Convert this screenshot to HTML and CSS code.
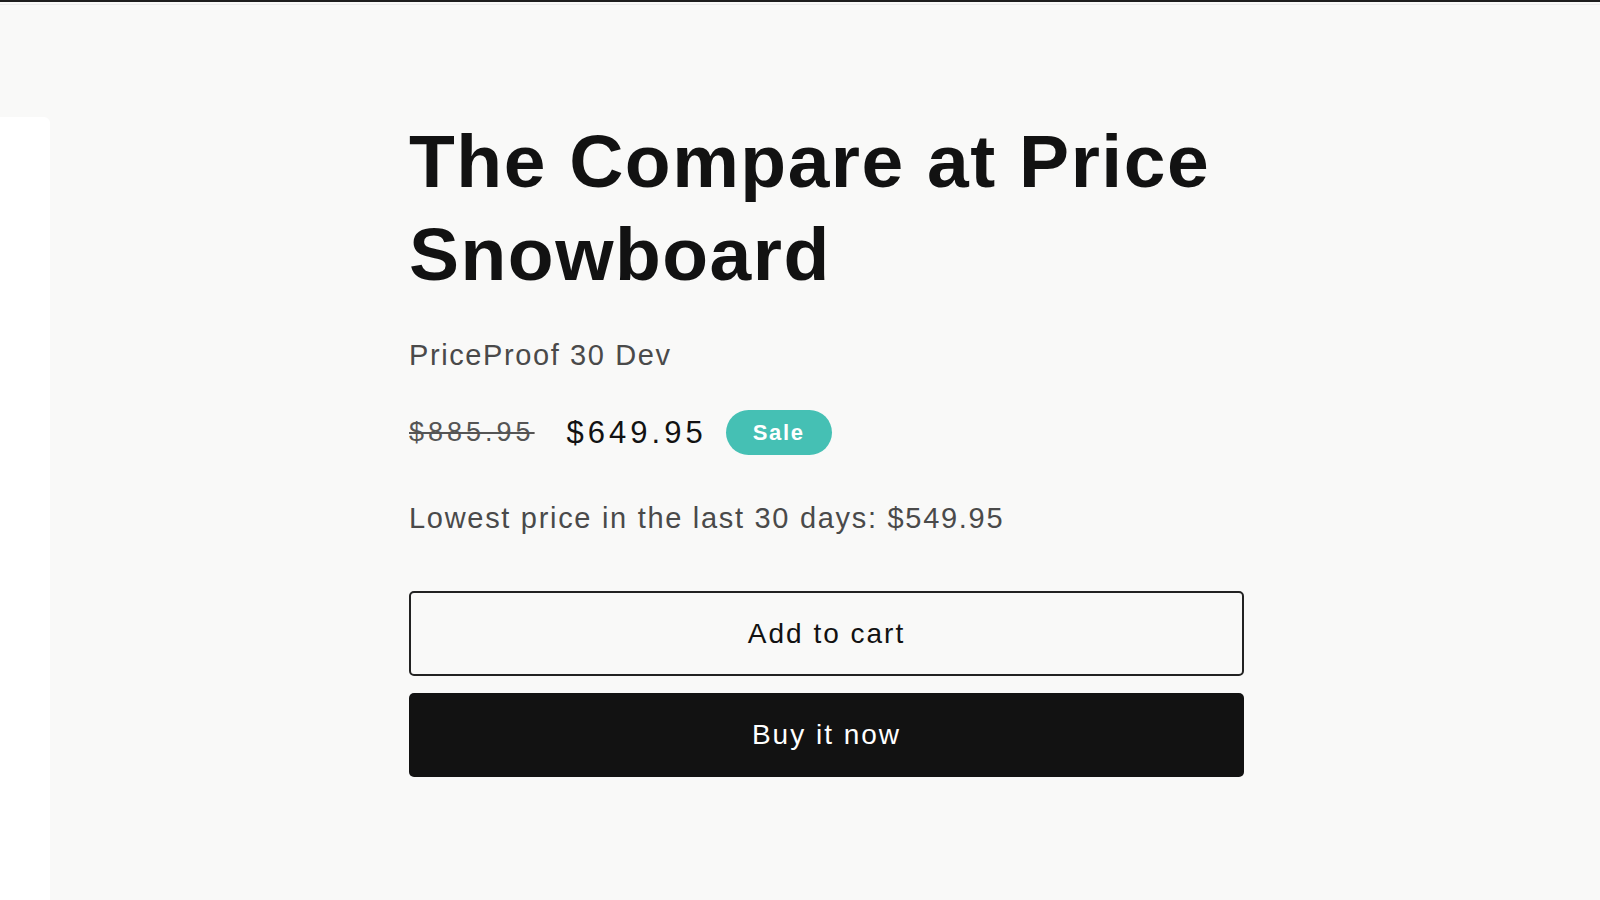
FILE: index.html
```html
<!DOCTYPE html>
<html lang="en">
<head>
    <meta charset="UTF-8">
    <meta name="viewport" content="width=device-width, initial-scale=1.0">
    <title>The Compare at Price Snowboard</title>
    <link rel="stylesheet" href="styles.css">
</head>
<body>
    <div class="top-bar"></div>

    <div class="product">
        <div class="product-media"></div>

        <div class="product-info">
            <h1 class="product-title">The Compare at Price Snowboard</h1>
            <p class="product-vendor">PriceProof 30 Dev</p>

            <div class="price-row">
                <s class="price-compare">$885.95</s>
                <span class="price-sale">$649.95</span>
                <span class="badge-sale">Sale</span>
            </div>

            <p class="price-lowest">Lowest price in the last 30 days: $549.95</p>

            <div class="product-buttons">
                <button class="btn btn-outline">Add to cart</button>
                <button class="btn btn-solid">Buy it now</button>
            </div>
        </div>
    </div>
</body>
</html>
```

FILE: styles.css
```css
body {
    margin: 0;
    font-family: 'Liberation Sans', Arial, sans-serif;
    background: #f9f9f8;
    color: #121212;
    height: 100vh;
    overflow: hidden;
}

.top-bar {
    height: 2px;
    border-top: 2px solid #1e1e1e;
    border-bottom: 1px solid #ececec;
}

.product {
    display: flex;
    align-items: flex-start;
    height: calc(100vh - 5px);
}

.product-media {
    align-self: stretch;
    width: 50px;
    margin-top: 112px;
    background: #ffffff;
    border-top-right-radius: 6px;
    flex-shrink: 0;
}

.product-info {
    width: 835px;
    margin-left: 359px;
    padding-top: 110px;
}

.product-title {
    margin: 0;
    font-size: 75px;
    line-height: 93px;
    font-weight: bold;
    letter-spacing: 1.5px;
}

.product-vendor {
    margin: 33px 0 0;
    font-size: 29px;
    line-height: 42px;
    letter-spacing: 1.6px;
    color: #4a4a4a;
}

.price-row {
    display: flex;
    align-items: center;
    margin-top: 34px;
    height: 45px;
}

.price-compare {
    font-size: 27px;
    letter-spacing: 4px;
    color: #555555;
    margin-right: 32px;
}

.price-sale {
    font-size: 31px;
    letter-spacing: 4px;
    margin-right: 19px;
}

.badge-sale {
    display: inline-flex;
    align-items: center;
    justify-content: center;
    width: 106px;
    height: 45px;
    border-radius: 23px;
    background: #45c0b4;
    color: #ffffff;
    font-size: 22px;
    font-weight: bold;
    letter-spacing: 1.6px;
}

.price-lowest {
    margin: 42px 0 0;
    font-size: 29px;
    line-height: 42px;
    letter-spacing: 1.7px;
    color: #4a4a4a;
}

.product-buttons {
    display: flex;
    flex-direction: column;
    gap: 17px;
    margin-top: 52px;
}

.btn {
    width: 100%;
    height: 85px;
    border-radius: 5px;
    font-family: inherit;
    font-size: 28px;
    letter-spacing: 2px;
    cursor: pointer;
}

.btn-outline {
    background: transparent;
    border: 2px solid #222222;
    color: #121212;
}

.btn-solid {
    height: 84px;
    background: #121212;
    border: none;
    color: #ffffff;
}
```
